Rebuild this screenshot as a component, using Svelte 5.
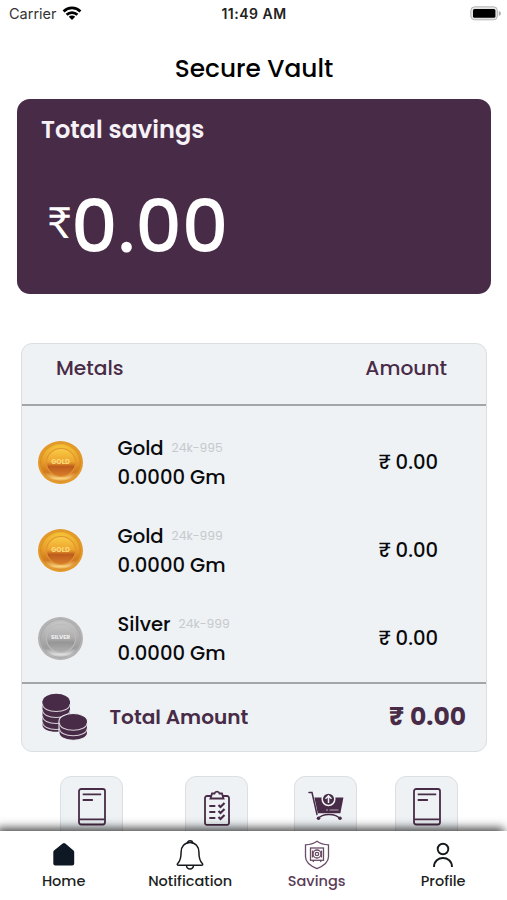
<script>
	const METALS = [
		{ name: 'Gold', purity: '24k-995', weight: '0.0000 Gm', amount: '0.00', coin: 'gold' },
		{ name: 'Gold', purity: '24k-999', weight: '0.0000 Gm', amount: '0.00', coin: 'gold' },
		{ name: 'Silver', purity: '24k-999', weight: '0.0000 Gm', amount: '0.00', coin: 'silver' },
	];

	const ACTIONS = ['book', 'checklist', 'cart', 'book'];

	const TABS = [
		{ id: 'home', label: 'Home' },
		{ id: 'notification', label: 'Notification' },
		{ id: 'savings', label: 'Savings' },
		{ id: 'profile', label: 'Profile' },
	];

	let active = $state('savings');
</script>

<div class="screen">
	<header class="status">
		<span class="carrier">
			Carrier
			<svg width="20" height="14" viewBox="0 0 20 14" fill="none" stroke="#000" stroke-width="2.8">
				<path d="M1.6 5.4a12 12 0 0 1 16.8 0" />
				<path d="M4.6 8.7a7.8 7.8 0 0 1 10.8 0" />
				<path d="M10 14 6.8 10.8a4.6 4.6 0 0 1 6.4 0z" fill="#000" stroke="none" />
			</svg>
		</span>
		<span class="time">11:49 AM</span>
		<svg class="battery" width="31" height="15" viewBox="0 0 31 15">
			<rect x=".8" y=".8" width="26.6" height="13" rx="3.8" fill="#e4e4e4" stroke="#b5b5b5" />
			<rect x="3" y="3" width="22.4" height="8.8" rx="1.6" fill="#000" />
			<path d="M28.8 5v4.8c1.5-.4 2-1.3 2-2.4s-.5-2-2-2.4z" fill="#aaa" />
		</svg>
	</header>

	<h1>Secure Vault</h1>

	<section class="vault">
		<h2>Total savings</h2>
		<p class="balance"><span class="rupee">₹</span><span class="value">0.00</span></p>
	</section>

	<section class="table">
		<div class="head">
			<span>Metals</span>
			<span>Amount</span>
		</div>

		<div class="rows">
			{#each METALS as m}
				<div class="row">
					<div class="coin {m.coin}"><div class="coin-face">{m.coin.toUpperCase()}</div></div>
					<div class="metal">
						<p class="name">{m.name}<small>{m.purity}</small></p>
						<p>{m.weight}</p>
					</div>
					<p class="amount"><span>₹</span>{m.amount}</p>
				</div>
			{/each}
		</div>

		<div class="total">
			<svg width="46" height="48" viewBox="0 0 46 48" fill="#482b46" stroke="#d8cfd9" stroke-width="1.1">
				<path d="M.5 8v24c0 4 6 6.800 13.700 6.800S28 36 28 32V8z" stroke="none" />
				<path d="M.5 11c0 4.500 6 7.500 13.700 7.500S28 15.500 28 11M.5 17c0 4.500 6 7.500 13.700 7.500S28 21.500 28 17M.5 23c0 4.500 6 7.500 13.700 7.500S28 27.500 28 23M.5 29c0 4.500 6 7.500 13.700 7.500S28 33.500 28 29" fill="none" />
				<ellipse cx="14.2" cy="8.5" rx="13.6" ry="7.8" stroke="none" />
				<path d="M17 28v12c0 4.300 6.500 7.200 14.200 7.200S45.500 44.300 45.500 40V28c0-4.300-6.500-7.500-14.300-7.500S17 23.700 17 28z" stroke="#eef2f5" />
				<path d="M17.500 30c0 4.500 6 7.300 13.700 7.300S45 34.500 45 30M17.500 35.500c0 4.500 6 7.300 13.700 7.300s13.800-2.800 13.800-7.300" fill="none" />
			</svg>
			<span class="total-label">Total Amount</span>
			<span class="total-value"><span>₹</span>0.00</span>
		</div>
	</section>

	<div class="actions">
		{#each ACTIONS as a}
			<button class="action" aria-label={a}>
				{#if a === 'book'}
					<svg width="28" height="38" viewBox="0 0 28 38" fill="none" stroke="#482b46" stroke-width="1.8">
						<rect x="1" y="1" width="26" height="35.5" rx="2.2" />
						<path d="M1.500 31.300h25M4.700 6.300h18.500M4.700 12h10.200" />
					</svg>
				{:else if a === 'checklist'}
					<svg width="26" height="38" viewBox="0 0 26 38" fill="none" stroke="#482b46" stroke-width="1.8">
						<path d="M7 8H3a2 2 0 0 0-2 2v25a1.800 1.800 0 0 0 2 1.800h20a1.800 1.800 0 0 0 2-1.800V10a2 2 0 0 0-2-2h-4" />
						<path d="M8 5.500h2.500a2.600 2.600 0 0 1 5 0H18l1.500 5h-13z" fill="#eef2f5" />
						<path d="M5.300 18h6M5.300 24h6M5.300 30h6" />
						<path d="m14.500 17 2 2 4-4M14.500 23l2 2 4-4M14.500 29l2 2 4-4" stroke-width="2.2" />
					</svg>
				{:else}
					<svg width="36" height="30" viewBox="0 0 36 30" fill="none" stroke="#482b46" stroke-width="1.5">
						<path d="M1 1.500h3l5 22" stroke-linecap="round" />
						<path d="M6.400 6.500h29l-3 15.700H9.800z" fill="#482b46" stroke="none" />
						<path d="M10 28c4-6 18-6 22 0" />
						<circle cx="10.5" cy="27.3" r="1.8" fill="#482b46" stroke="none" />
						<circle cx="32" cy="27.3" r="1.8" fill="#482b46" stroke="none" />
						<circle cx="20.5" cy="8.2" r="6.3" fill="#482b46" stroke="#eef2f5" />
						<path d="M20.500 12V5m-3 2.800 3-3 3 3" stroke="#eef2f5" />
						<path d="M18 19h2m1.500 0h9" stroke="#b8a9b9" stroke-width="1" />
					</svg>
				{/if}
			</button>
		{/each}
	</div>

	<nav>
		{#each TABS as t}
			<button class="tab" class:active={active === t.id} onclick={() => (active = t.id)}>
				<svg width="30" height="32" viewBox="0 0 30 32" fill="none" stroke="#16191d" stroke-width="1.5">
					{#if t.id === 'home'}
						<path d="M13.700 4.500a2 2 0 0 1 2.600 0l8.200 7a2 2 0 0 1 .7 1.500v11.500a2 2 0 0 1-2 2H6.300a2 2 0 0 1-2-2V13a2 2 0 0 1 .7-1.500z" fill="#0e1825" stroke="none" />
					{:else if t.id === 'notification'}
						<path d="M12.300 4.500a2.700 2.700 0 0 1 5.400 0" />
						<path d="M15 3.500c-5.500 0-8.900 4.300-8.900 9.500 0 7-1.300 9.500-3.400 11.500-.8.900-.4 1.800.8 1.800h23c1.200 0 1.600-.9.800-1.800-2.100-2-3.400-4.500-3.400-11.500 0-5.200-3.400-9.500-8.900-9.500z" />
						<path d="M11.500 26.500a3.500 3.500 0 0 0 7 0" />
					{:else if t.id === 'savings'}
						<g stroke="#6b4c67" stroke-width="1.3">
							<path d="M15 2.200c3.300 2.300 7 3.400 11.500 3.600v12c0 5.200-4.500 9-11.500 11.800C8 26.800 3.500 23 3.500 17.800v-12C8 5.600 11.700 4.500 15 2.200z" />
							<rect x="8.500" y="9" width="13" height="12.3" />
							<circle cx="15" cy="15" r="4" />
							<circle cx="15" cy="15" r="1.7" />
							<path d="M10.500 11.500v7M19.500 11.500v7M12 21l-1 2M18 21l1 2" />
						</g>
					{:else}
						<circle cx="15" cy="10" r="5.300" stroke-width="1.9" />
						<path d="M6 28c0-12 18-12 18 0" stroke-width="1.9" />
					{/if}
				</svg>
				<span>{t.label}</span>
			</button>
		{/each}
	</nav>
</div>

<style>
	:global(body) {
		background: #fff;
	}

	.screen {
		width: 507px;
		height: 900px;
		display: flex;
		flex-direction: column;
		overflow: hidden;
		background: #fff;
		color: #090a0c;
		font-family: Poppins, Inter, sans-serif;
		font-weight: 500;
	}

	h1, h2, p {
		margin: 0;
	}

	button {
		border: 0;
		padding: 0;
		background: none;
		font: inherit;
		color: inherit;
		cursor: pointer;
	}

	svg {
		display: block;
		flex: none;
	}

	.status {
		display: grid;
		grid-template-columns: 1fr auto 1fr;
		align-items: center;
		height: 28px;
		padding: 0 6px 0 9px;
		font-family: Inter, sans-serif;
		font-size: 14.5px;
		line-height: 18px;
	}

	.carrier {
		display: flex;
		align-items: center;
		gap: 6px;
		margin-top: -1px;
		font-weight: 400;
		color: #333;
	}

	.carrier svg {
		margin: -2px 0 0 -1px;
	}

	.time {
		margin: -1px 2px 0 0;
		font-weight: 600;
		font-size: 14px;
		letter-spacing: 0.5px;
		color: #222;
	}

	.battery {
		justify-self: end;
		margin-top: -1px;
	}

	h1 {
		box-sizing: border-box;
		height: 48.5px;
		margin-top: 22px;
		padding: 0.5px 0 0 1px;
		font-size: 24.8px;
		font-weight: 500;
		line-height: 36px;
		text-align: center;
		color: #000;
	}

	.vault {
		flex: none;
		box-sizing: border-box;
		height: 195.5px;
		margin: 0 16px 0 17px;
		padding: 13.5px 24px;
		border-radius: 13px;
		background: #482b46;
		color: #fff;
	}

	h2 {
		font-size: 24.1px;
		font-weight: 600;
		line-height: 36px;
		color: #f6f2f7;
	}

	.balance {
		display: flex;
		margin-top: 43px;
		padding-left: 6px;
		line-height: 72px;
	}

	.rupee {
		width: 24px;
		margin-top: -5px;
		font-family: Lato, sans-serif;
		font-size: 43px;
		font-weight: 400;
	}

	.value {
		font-size: 72.8px;
	}

	.table {
		flex: none;
		box-sizing: border-box;
		height: 409px;
		margin: 49px 20px 0 21px;
		border: 1px solid #dcdfe1;
		border-radius: 11px;
		background: #eef2f5;
	}

	.head {
		display: flex;
		justify-content: space-between;
		box-sizing: border-box;
		height: 62px;
		padding: 10.8px 39px 0 34px;
		border-bottom: 2px solid #a3a6a9;
		font-size: 20.2px;
		line-height: 26px;
		color: #482b46;
	}

	.rows {
		padding-top: 12px;
	}

	.row {
		display: flex;
		align-items: center;
		height: 88px;
		padding: 0 48px 0 16px;
		font-size: 19.6px;
		line-height: 29px;
	}

	.coin {
		display: grid;
		place-items: center;
		box-sizing: border-box;
		width: 45px;
		height: 43px;
		border-radius: 50%;
	}

	.coin-face {
		display: grid;
		place-items: center;
		box-sizing: border-box;
		width: 30px;
		height: 29px;
		border-radius: 50%;
		font-size: 6.8px;
		font-weight: 700;
		line-height: 1;
	}

	.gold {
		border: 2px solid #e3982a;
		background: linear-gradient(#f8c838, #e9a02c 45%, #d07820 75%, #fbd580 92%, #e3982a);
		box-shadow: inset 0 0 2px 1px #d78622;
	}

	.gold .coin-face {
		border: 1px solid #e09430;
		background: linear-gradient(#f8cb45, #eda32c 48%, #bd5c1c 65%, #d87e2c);
		color: #fbd97c;
	}

	.silver {
		border: 2px solid #b3b3b3;
		background: linear-gradient(#c9c9c9, #b1b1b1 45%, #9c9c9c 75%, #e2e2e2 92%, #b3b3b3);
		box-shadow: inset 0 0 2px 1px #a5a5a5;
	}

	.silver .coin-face {
		border: 1px solid #bcbcbc;
		background: linear-gradient(#c4c4c4, #adadad 48%, #969696 65%, #b0b0b0);
		color: #eee;
		font-size: 5.8px;
	}

	.metal {
		flex: 1;
		margin-left: 34.5px;
		padding-top: 1.5px;
	}

	.name {
		display: flex;
		align-items: center;
	}

	small {
		margin: -2px 0 0 8px;
		font-size: 12.3px;
		font-weight: 400;
		color: #c6cacd;
	}

	.amount span {
		margin-right: 5px;
	}

	.total {
		display: flex;
		align-items: center;
		box-sizing: border-box;
		height: 68px;
		padding: 0 20px;
		border-top: 2px solid #a3a6a9;
		color: #482b46;
	}

	.total-label {
		flex: 1;
		margin: -1px 0 0 21.5px;
		font-size: 20.1px;
		font-weight: 600;
	}

	.total-value {
		font-size: 25px;
		font-weight: 700;
	}

	.total-value span {
		margin-right: 6px;
	}

	.actions {
		flex: 1;
		display: grid;
		grid-template-columns: 125px 109px 101px 63px;
		min-height: 0;
		padding: 23.5px 0 0 60px;
	}

	.action {
		display: flex;
		justify-content: center;
		box-sizing: border-box;
		width: 63px;
		height: 66px;
		padding-top: 11px;
		border: 1px solid #dcdfe1;
		border-radius: 11px;
		background: #eef2f5;
	}

	.action:nth-child(3) {
		padding-top: 14px;
	}

	nav {
		position: relative;
		flex: none;
		display: grid;
		grid-template-columns: repeat(4, 126.5px);
		height: 69px;
		padding-left: 0.4px;
		background: #fff;
		box-shadow: -3px -3px 9px 0 #000b;
	}

	.tab {
		display: flex;
		flex-direction: column;
		align-items: center;
		padding-top: 8px;
		font-size: 14.5px;
		line-height: 20px;
		color: #1d1f23;
	}

	.tab.active {
		color: #5b3c57;
	}
</style>
